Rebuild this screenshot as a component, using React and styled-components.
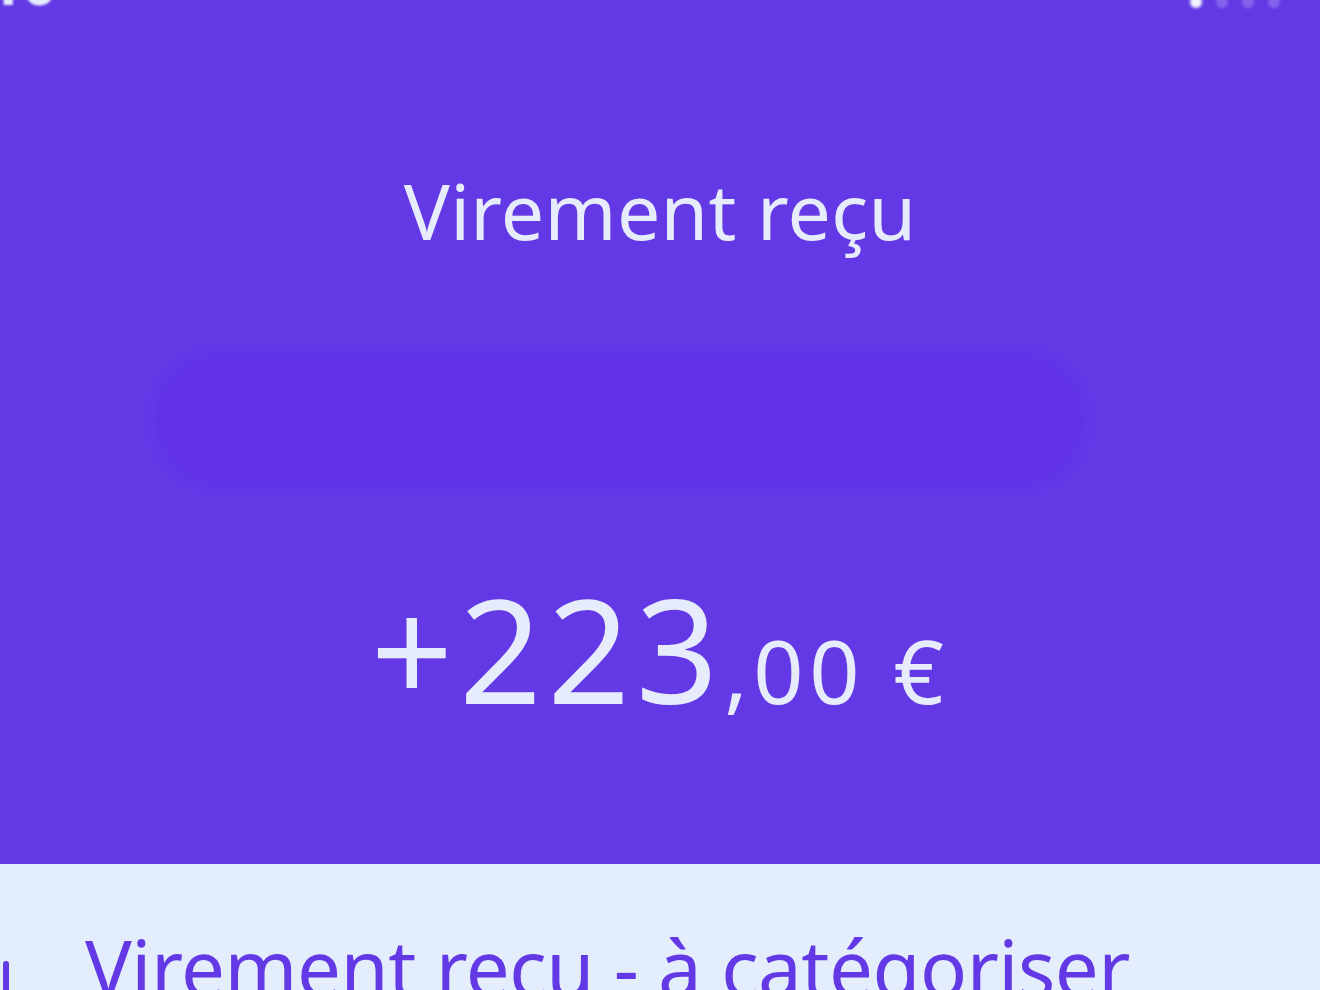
import styled, { createGlobalStyle } from "styled-components";

const GlobalStyle = createGlobalStyle`
  html, body {
    margin: 0;
    padding: 0;
    background: #e4edfc;
  }
  body {
    font-family: "Noto Sans", "Open Sans", sans-serif;
  }
`;

const Screen = styled.div`
  width: 1320px;
  height: 990px;
  overflow: hidden;
  display: flex;
  flex-direction: column;
`;

const Header = styled.header`
  height: 864px;
  flex-shrink: 0;
  background: #6339e6;
  display: flex;
  flex-direction: column;
  align-items: center;
  color: #e6ecfb;
`;

const StatusBar = styled.div`
  align-self: stretch;
  height: 10px;
  display: flex;
  justify-content: space-between;
  align-items: flex-end;
  overflow: hidden;
`;

const Clock = styled.span`
  font-size: 60px;
  line-height: 1;
  font-weight: 700;
  margin-left: -12px;
  margin-bottom: -2px;
  color: #e6ecfb;
  filter: blur(1px);
`;

const Signal = styled.div`
  display: flex;
  gap: 14px;
  margin-right: 40px;
  align-self: flex-start;
  margin-top: -4px;
`;

const Dot = styled.span`
  width: 12px;
  height: 12px;
  border-radius: 50%;
  background: ${(p) => (p.$on ? "#f2f4ff" : "rgba(255,255,255,0.22)")};
  filter: blur(1.5px);
`;

const Title = styled.h1`
  margin: 162px 0 0;
  font-size: 77px;
  font-weight: 400;
  line-height: 1;
  letter-spacing: 0.3px;
`;

const HiddenName = styled.div`
  width: 930px;
  height: 133px;
  margin: 104px 80px 0 0;
  border-radius: 67px;
  background: #6132e8;
  filter: blur(5px);
`;

const Amount = styled.div`
  margin-top: 90px;
  display: flex;
  align-items: baseline;
  line-height: 1;
`;

const Units = styled.span`
  font-size: 144px;
  font-weight: 400;
  letter-spacing: 6px;
`;

const Cents = styled.span`
  font-size: 88px;
  font-weight: 400;
  letter-spacing: 5.5px;
`;

const Band = styled.section`
  flex: 1;
  background: #e4edfc;
  display: flex;
  align-items: flex-start;
  padding-top: 64px;
  color: #6339e6;
`;

const Row = styled.div`
  display: flex;
  align-items: flex-start;
`;

const EdgeIcon = styled.svg`
  width: 80px;
  height: 80px;
  flex-shrink: 0;
  margin-left: -70px;
`;

const Label = styled.span`
  margin-left: 75px;
  font-size: 78px;
  font-weight: 400;
  line-height: 1;
  white-space: nowrap;
  letter-spacing: -0.5px;
`;

export default function App() {
  return (
    <>
      <GlobalStyle />
      <Screen>
        <Header>
          <StatusBar>
            <Clock>10</Clock>
            <Signal>
              <Dot $on />
              <Dot />
              <Dot />
              <Dot />
            </Signal>
          </StatusBar>
          <Title>Virement reçu</Title>
          <HiddenName />
          <Amount>
            <Units>+223</Units>
            <Cents>,00 €</Cents>
          </Amount>
        </Header>
        <Band>
          <Row>
            <EdgeIcon viewBox="0 0 80 80" fill="none" stroke="#6339e6" strokeWidth="6" strokeLinecap="round">
              <path d="M76 36 V90" />
            </EdgeIcon>
            <Label>Virement reçu - à catégoriser</Label>
          </Row>
        </Band>
      </Screen>
    </>
  );
}
